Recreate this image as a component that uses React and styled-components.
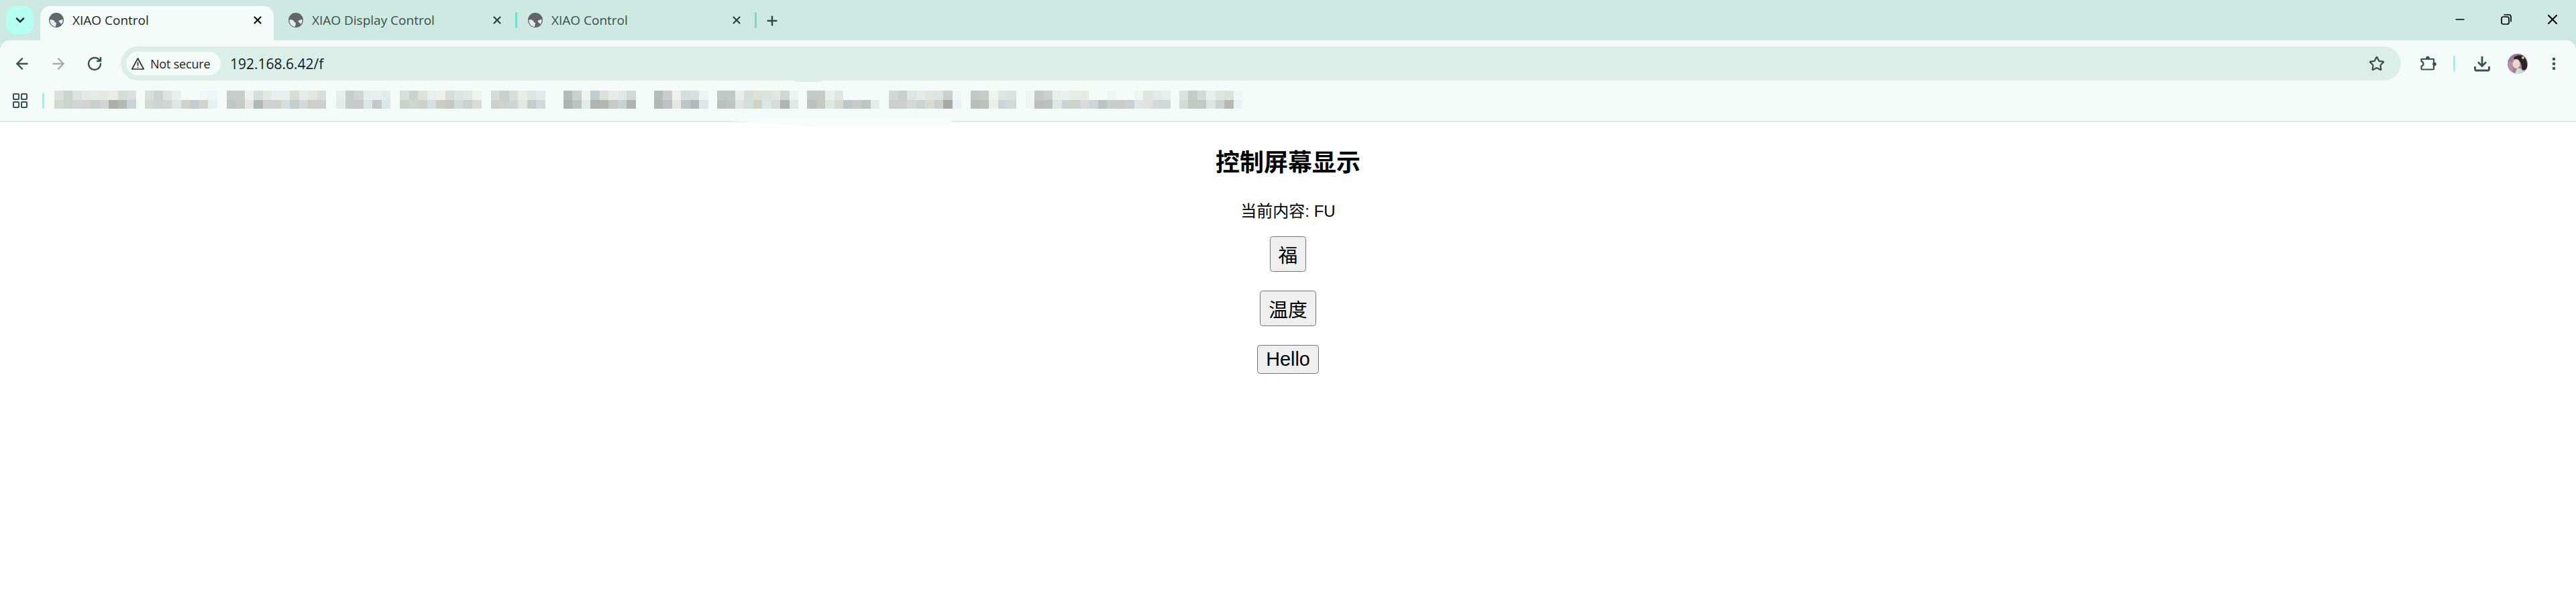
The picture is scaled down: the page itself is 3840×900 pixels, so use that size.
import React from "react";
import styled, { createGlobalStyle } from "styled-components";
import { ArrowLeft, ArrowRight, RotateCw, ChevronDown, X, Plus, Minus, Star, MoreVertical } from "lucide-react";

const GlobalStyle = createGlobalStyle`
    body {
        margin: 0;
        background: #fff;
        font-family: "Liberation Sans", "Noto Sans CJK SC", sans-serif;
    }
`;

const Chrome = styled.header`
    position: relative;
    background: #cee8e2;
`;

const TabStrip = styled.div`
    height: 60px;
    display: flex;
    align-items: flex-end;
    padding-left: 9px;
`;

const TabSearch = styled.div`
    width: 41px;
    height: 42px;
    margin: 0 10px 9px 0;
    border-radius: 14px;
    background: #b5fff2;
    color: #1f2f2c;
    display: flex;
    align-items: center;
    justify-content: center;
`;

const Tabs = styled.div`
    display: flex;
    gap: 9px;
`;

const Tab = styled.div`
    position: relative;
    width: 348px;
    height: 51px;
    box-sizing: border-box;
    padding: 0 15px 9px 13px;
    display: flex;
    align-items: center;
    gap: 13px;
    border-radius: 15px 15px 0 0;
    background: ${props => props.$active ? "#f5fbf8" : "transparent"};
    color: ${props => props.$active ? "#1e2624" : "#37504b"};
    font-family: "Open Sans", sans-serif;
    font-size: 19px;

    &::before {
        content: "";
        display: ${props => props.$sep ? "block" : "none"};
        position: absolute;
        right: -6px;
        top: 9px;
        width: 3px;
        height: 24px;
        border-radius: 2px;
        background: #74dccd;
    }
`;

const TabTitle = styled.span`
    flex: 1;
    white-space: nowrap;
`;

const CloseBox = styled.span`
    display: flex;
    color: ${props => props.$active ? "#111" : "#2c4641"};
`;

const NewTab = styled.div`
    display: flex;
    margin: 0 0 18px 18px;
    color: #2c4641;
`;

const WindowControls = styled.div`
    margin-left: auto;
    align-self: flex-start;
    display: flex;
    padding: 17px 23px 0 0;
    gap: 45px;
    color: #000;
`;

const WinButton = styled.span`
    width: 24px;
    height: 24px;
    display: flex;
    align-items: center;
    justify-content: center;
`;

const Toolbar = styled.div`
    height: 60px;
    box-sizing: border-box;
    display: flex;
    align-items: center;
    padding: 9px 21px 0 6px;
    background: #f5fbf8;
    border-radius: 15px 15px 0 0;
`;

const NavButton = styled.span`
    width: 54px;
    display: flex;
    justify-content: center;
    color: ${props => props.$off ? "#a5acaa" : "#38524d"};
`;

const Omnibox = styled.div`
    flex: 1;
    height: 51px;
    margin-left: 12px;
    box-sizing: border-box;
    padding: 0 24px 0 8px;
    display: flex;
    align-items: center;
    border-radius: 26px;
    background: #dbeee8;
`;

const SecurityChip = styled.div`
    width: 141px;
    height: 35px;
    box-sizing: border-box;
    padding-left: 7px;
    display: flex;
    align-items: center;
    gap: 8px;
    border-radius: 18px;
    background: #f5fbf8;
    color: #1c2422;
    font-family: "Open Sans", sans-serif;
    font-size: 18px;
    letter-spacing: -0.2px;
    white-space: nowrap;
`;

const Url = styled.span`
    flex: 1;
    margin-left: 14px;
    color: #14201d;
    font-family: "Open Sans", sans-serif;
    font-size: 21px;
`;

const ToolSlot = styled.span`
    display: flex;
    margin-left: ${props => props.$gap}px;
    color: #38524d;
`;

const ToolDivider = styled.span`
    width: 3px;
    height: 24px;
    margin-left: 25px;
    border-radius: 2px;
    background: #9cf2e4;
`;

const BookmarkBar = styled.div`
    height: 60px;
    display: flex;
    align-items: center;
    background: #f5fbf8;
    border-bottom: 2px solid #dcebe6;
`;

const AppsButton = styled.span`
    display: flex;
    margin-left: 19px;
    color: #38524d;
`;

const BarDivider = styled.span`
    width: 3px;
    height: 24px;
    margin: 0 15px 0 22px;
    border-radius: 2px;
    background: #9cf2e4;
`;

const Bookmarks = styled.div`
    display: flex;
    margin-top: -3px;
`;

const BlurredLabel = styled.div`
    display: grid;
    grid-template-rows: 14px 13px;
    grid-auto-flow: column;
    grid-auto-columns: 13.5px;
    margin-left: ${props => props.$gap}px;
`;

const Smudge = styled.svg`
    position: absolute;
    left: 0;
    top: 0;
    pointer-events: none;
`;

const Page = styled.main`
    display: flex;
    flex-direction: column;
    align-items: center;
    padding-top: 40px;
`;

const Heading = styled.h2`
    margin: 0;
    font-size: 36px;
    line-height: 41px;
    font-weight: 700;
    color: #000;
`;

const Current = styled.p`
    margin: 37px 0 0;
    font-size: 24px;
    line-height: 30px;
    color: #000;
`;

const ScreenButton = styled.button`
    height: ${props => props.$short ? 43 : 53}px;
    margin-top: ${props => props.$first ? 22 : 28}px;
    padding: 0 12px;
    border: 1.5px solid #767676;
    border-radius: 4.5px;
    background: #efefef;
    color: #000;
    font-family: "Liberation Sans", "Noto Sans CJK SC", sans-serif;
    font-size: 28.8px;
`;

const blank = "#f5fbf8";

const labels = [
    { gap: 0, top: ["#dcdfdd", "#ccd2d0", "#dde2e0", "#e2e8ea", "#e4ebe5", "#e5e8e3", "#e9edea", "#d6dbd6", "#d9e1e0"], bottom: ["#d4d8d5", "#cdd2cf", "#d1d6d4", "#d2d5cd", "#c6d0cf", "#d1d5d7", "#aeaea8", "#b3b9b5", "#c7d3d4"] },
    { gap: 13, top: ["#dadedb", "#ccd2d0", "#dee3e1", "#e9efed", blank, blank, "#f2f7f6", "#eef5f6"], bottom: ["#d3d8d5", "#cfd4d2", "#d1d6d4", "#dfe6e4", "#cfd2c8", "#c1ced0", "#d1d4cd", "#e6f1f2"] },
    { gap: 14, top: ["#c8cdcb", "#c8cdcb", "#eef2ef", "#d7dcde", "#e4e7e2", "#e9eeee", "#e9f0ec", "#d6dcd7", "#e5edea", "#e4e8df", "#d9dedb"], bottom: ["#c0c6c4", "#c6cbc8", "#e3e8e5", "#b0b9b6", "#cdd1d2", "#d0d1ca", "#d3dfe1", "#c4cecf", "#d2dadb", "#cfcfc6", "#c9d2cf"] },
    { gap: 15, top: ["#e8eeeb", "#c8cdcb", "#d1d6d3", "#e6eeed", "#e8eeeb", "#e4eceb"], bottom: ["#e5ebe8", "#c6cbc9", "#c6cbc9", "#dae6e7", "#c3c9c9", "#dce8e8"] },
    { gap: 14, top: ["#d9dddb", "#cbd1ce", "#dde2df", "#e8eeeb", "#edf1e8", "#d8dcd7", "#dde5e3", "#e2e7e4", "#eff4f1"], bottom: ["#cdd1ce", "#cfd4d1", "#cdd1ce", "#d4dfe1", "#cdcdc0", "#c3c9c4", "#d1dad8", "#c8d2d1", "#d9ddd6"] },
    { gap: 14, top: ["#d6dbd8", "#cad0ce", "#d8dcda", "#e9ede7", "#dfe4e4", "#e4e9ea"], bottom: ["#ccd1ce", "#cdd2cf", "#d0d5d3", "#e2e7e0", "#c7cdce", "#d1d9dc"] },
    { gap: 27, top: ["#b5bab8", "#cbd0cd", "#eff4ee", "#c2ccce", "#dbe0da", "#e7eae5", "#e0e9e8", "#d4d9d6"], bottom: ["#adb3b0", "#bdc3c0", "#e1eced", "#aeb4b2", "#afb7b1", "#c6cbc4", "#c8d4d4", "#b0b5b4"] },
    { gap: 27, top: ["#b6bbb8", "#c9cecc", "#edf1ea", "#d7dcdd", "#d8dfe1", "#eff4f2"], bottom: ["#b1b7b4", "#bdc2c0", "#e6e7e1", "#bec7cb", "#b1b9bd", "#dde5e9"] },
    { gap: 13, top: ["#c3c8c6", "#c3c8c6", "#e9eeeb", "#d8ddd7", "#dde1da", "#dce2de", "#e3e7e4", "#d2d7d4", "#eff3f1"], bottom: ["#bbc1be", "#c0c5c3", "#dfe5e2", "#d2dedc", "#d0d2c6", "#dde6e6", "#d7dcda", "#aeb4b1", "#e1e7e4"] },
    { gap: 13, top: ["#c5c9c7", "#c5c9c7", "#e9efec", "#e1e6e3", blank, blank, blank, blank], bottom: ["#bcc1bf", "#c5cac7", "#e1e6e3", "#d6dbd0", "#bfc6c9", "#c7ccc9", "#bcc4c4", "#e5ecea"] },
    { gap: 14, top: ["#d3d8d5", "#cacfcd", "#e0e5e3", "#e6ebe9", "#e3e6df", "#dfe3e1", "#cbd0ce", "#eff7f7"], bottom: ["#cbcfcd", "#cbd0ce", "#d4d9d7", "#cdd3cf", "#d9dbd2", "#cecfcb", "#a6aaa8", "#e9f2f4"] },
    { gap: 14, top: ["#c3c8c6", "#c7ccc9", "#eff3f0", "#dfe5e4", "#dde2df"], bottom: ["#b9bebc", "#bcc1be", "#eaefec", "#cdd5d9", "#d3d9d6"] },
    { gap: 14, top: ["#f0f5f2", "#c3c8c6", "#ccd1ce", "#e7eeeb", "#eaf0ef", "#e9ece4", "#e6ebe6", blank, blank, "#f0f4f2", blank, blank, "#f0f5f2", "#dfe4e1", "#e5e9e7", "#e9eeec"], bottom: ["#f0f5f2", "#bbc0be", "#bcc1bf", "#dfe6e8", "#cbd4d4", "#cfd2c8", "#d8ddd8", "#ced6da", "#bbc4c4", "#cacecb", "#cacdc7", "#c8d1d0", "#dfe6e5", "#dfe3dc", "#d1d9dd", "#d1d9d5"] },
    { gap: 13, top: ["#dde2df", "#c6cbc9", "#d5dad7", "#e9efec", "#dfe4df", "#dce1db", "#f0f5f5"], bottom: ["#d4dad7", "#c3c8c5", "#c3c9c5", "#dde5e4", "#cbd3d2", "#b7b8b3", "#e8f2f5"] },
];

const GlobeIcon = () => (
    <svg width="22" height="22" viewBox="0 0 24 24">
        <circle cx="12" cy="12" r="12" fill="#62666c" />
        <path d="M1.500 11.500c3-.6 5.500-.2 7 1.500 1 1.200 1 2.700 3 3.200l.5 1.800-1.500 5C5 22 1 17 1.500 11.500z" fill="#e6ecea" />
        <path d="M15.500 13.500c2-1 4-2.500 7-2.500.3 3-.5 5.500-2.500 7.500-1-1.500-3-3-4.500-5z" fill="#e6ecea" />
    </svg>
);

const WarningIcon = () => (
    <svg width="21" height="20" viewBox="0 0 21 20" fill="none" stroke="#2a3331" strokeWidth="1.700">
        <path d="M10.500 2 1.800 18h17.400z" strokeLinejoin="round" />
        <path d="M10.500 7.500v5.500M10.500 14.500v1.500" />
    </svg>
);

const RestoreIcon = () => (
    <svg width="16" height="16" viewBox="0 0 16 16" fill="none" stroke="#000" strokeWidth="1.700">
        <rect x="1" y="4" width="11" height="11" rx="2.500" />
        <path d="M4.500 1h7.500a3 3 0 0 1 3 3v7.500" />
    </svg>
);

const ExtensionIcon = () => (
    <svg width="24" height="24" viewBox="0 0 24 24" fill="none" stroke="#38524d" strokeWidth="2.200" strokeLinejoin="round">
        <path d="M2 5h18v14.500a1 1 0 0 1-1 1H2.500a1 1 0 0 1-1-1V15.500c2-.3 3-1.500 3-3.500s-1-3-3-3.500V5z" />
        <circle cx="11" cy="3.500" r="2.800" fill="#38524d" stroke="none" />
        <circle cx="21" cy="12.500" r="2.800" fill="#38524d" stroke="none" />
    </svg>
);

const AppsIcon = () => (
    <svg width="22" height="22" viewBox="0 0 22 22" fill="none" stroke="currentColor" strokeWidth="2">
        <rect x="1" y="1" width="8" height="8" rx="1" />
        <rect x="13" y="1" width="8" height="8" rx="1" />
        <rect x="1" y="13" width="8" height="8" rx="1" />
        <rect x="13" y="13" width="8" height="8" rx="1" />
    </svg>
);

const DownloadIcon = () => (
    <svg width="24" height="24" viewBox="0 0 24 24" fill="none" stroke="#38524d" strokeWidth="2.800">
        <path d="M12 1v14M6 9.500l6 6 6-6" />
        <path d="M1.500 16v4a2 2 0 0 0 2 2h17a2 2 0 0 0 2-2v-4" />
    </svg>
);

const AvatarIcon = () => (
    <svg width="30" height="30" viewBox="0 0 30 30">
        <defs>
            <clipPath id="avatarClip"><circle cx="15" cy="15" r="15" /></clipPath>
        </defs>
        <g clipPath="url(#avatarClip)">
            <rect width="30" height="30" fill="#9a8099" />
            <path d="M0 14c3-3 6-2 8 0v16H0z" fill="#ad94aa" />
            <path d="M9 6c4-5 14-5 17 0 3 5 4 14 3 18h-8c1-6-1-12-5-14-3-1-6 0-7-4z" fill="#2b2528" />
            <ellipse cx="13" cy="15" rx="5.500" ry="7" fill="#efd6cb" />
            <path d="M14 22h6l4 8H11z" fill="#e6dcd8" />
            <path d="M16 24l5-1 5 7h-9z" fill="#b6e2c8" />
            <circle cx="23" cy="6" r="2" fill="#b9d88f" />
        </g>
    </svg>
);

const App = () => {
    return (
        <>
            <GlobalStyle />
            <Chrome>
                <TabStrip>
                    <TabSearch><ChevronDown size={20} strokeWidth={3} /></TabSearch>
                    <Tabs>
                        <Tab $active>
                            <GlobeIcon />
                            <TabTitle>XIAO Control</TabTitle>
                            <CloseBox $active><X size={18} strokeWidth={3} /></CloseBox>
                        </Tab>
                        <Tab $sep>
                            <GlobeIcon />
                            <TabTitle>XIAO Display Control</TabTitle>
                            <CloseBox><X size={18} strokeWidth={3} /></CloseBox>
                        </Tab>
                        <Tab $sep>
                            <GlobeIcon />
                            <TabTitle>XIAO Control</TabTitle>
                            <CloseBox><X size={18} strokeWidth={3} /></CloseBox>
                        </Tab>
                    </Tabs>
                    <NewTab><Plus size={22} strokeWidth={2.6} /></NewTab>
                    <WindowControls>
                        <WinButton><Minus size={20} strokeWidth={2} /></WinButton>
                        <WinButton><RestoreIcon /></WinButton>
                        <WinButton><X size={24} strokeWidth={2} /></WinButton>
                    </WindowControls>
                </TabStrip>
                <Toolbar>
                    <NavButton><ArrowLeft size={26} strokeWidth={2.2} /></NavButton>
                    <NavButton $off><ArrowRight size={26} strokeWidth={2.2} /></NavButton>
                    <NavButton><RotateCw size={24} strokeWidth={2.4} /></NavButton>
                    <Omnibox>
                        <SecurityChip><WarningIcon />Not secure</SecurityChip>
                        <Url>192.168.6.42/f</Url>
                        <Star size={24} strokeWidth={2.2} color="#3d4a47" />
                    </Omnibox>
                    <ToolSlot $gap={29}><ExtensionIcon /></ToolSlot>
                    <ToolDivider />
                    <ToolSlot $gap={28}><DownloadIcon /></ToolSlot>
                    <ToolSlot $gap={26}><AvatarIcon /></ToolSlot>
                    <ToolSlot $gap={27}><MoreVertical size={24} strokeWidth={2.6} /></ToolSlot>
                </Toolbar>
                <BookmarkBar>
                    <AppsButton><AppsIcon /></AppsButton>
                    <BarDivider />
                    <Bookmarks>
                        {labels.map((label, i) => (
                            <BlurredLabel key={i} $gap={label.gap}>
                                {label.top.map((c, j) => (
                                    <React.Fragment key={j}>
                                        <span style={{ background: c }} />
                                        <span style={{ background: label.bottom[j] }} />
                                    </React.Fragment>
                                ))}
                            </BlurredLabel>
                        ))}
                    </Bookmarks>
                </BookmarkBar>
                <Smudge width="1500" height="192">
                    <polygon points="1090,180 1220,189 1415,189 1418,180" fill="#f7fbf9" />
                    <polygon points="1182,120 1187,122 1222,122 1226,120" fill="#dcefe9" />
                </Smudge>
            </Chrome>
            <Page>
                <Heading>控制屏幕显示</Heading>
                <Current>当前内容: FU</Current>
                <ScreenButton $first>福</ScreenButton>
                <ScreenButton>温度</ScreenButton>
                <ScreenButton $short>Hello</ScreenButton>
            </Page>
        </>
    );
};

export default App;
